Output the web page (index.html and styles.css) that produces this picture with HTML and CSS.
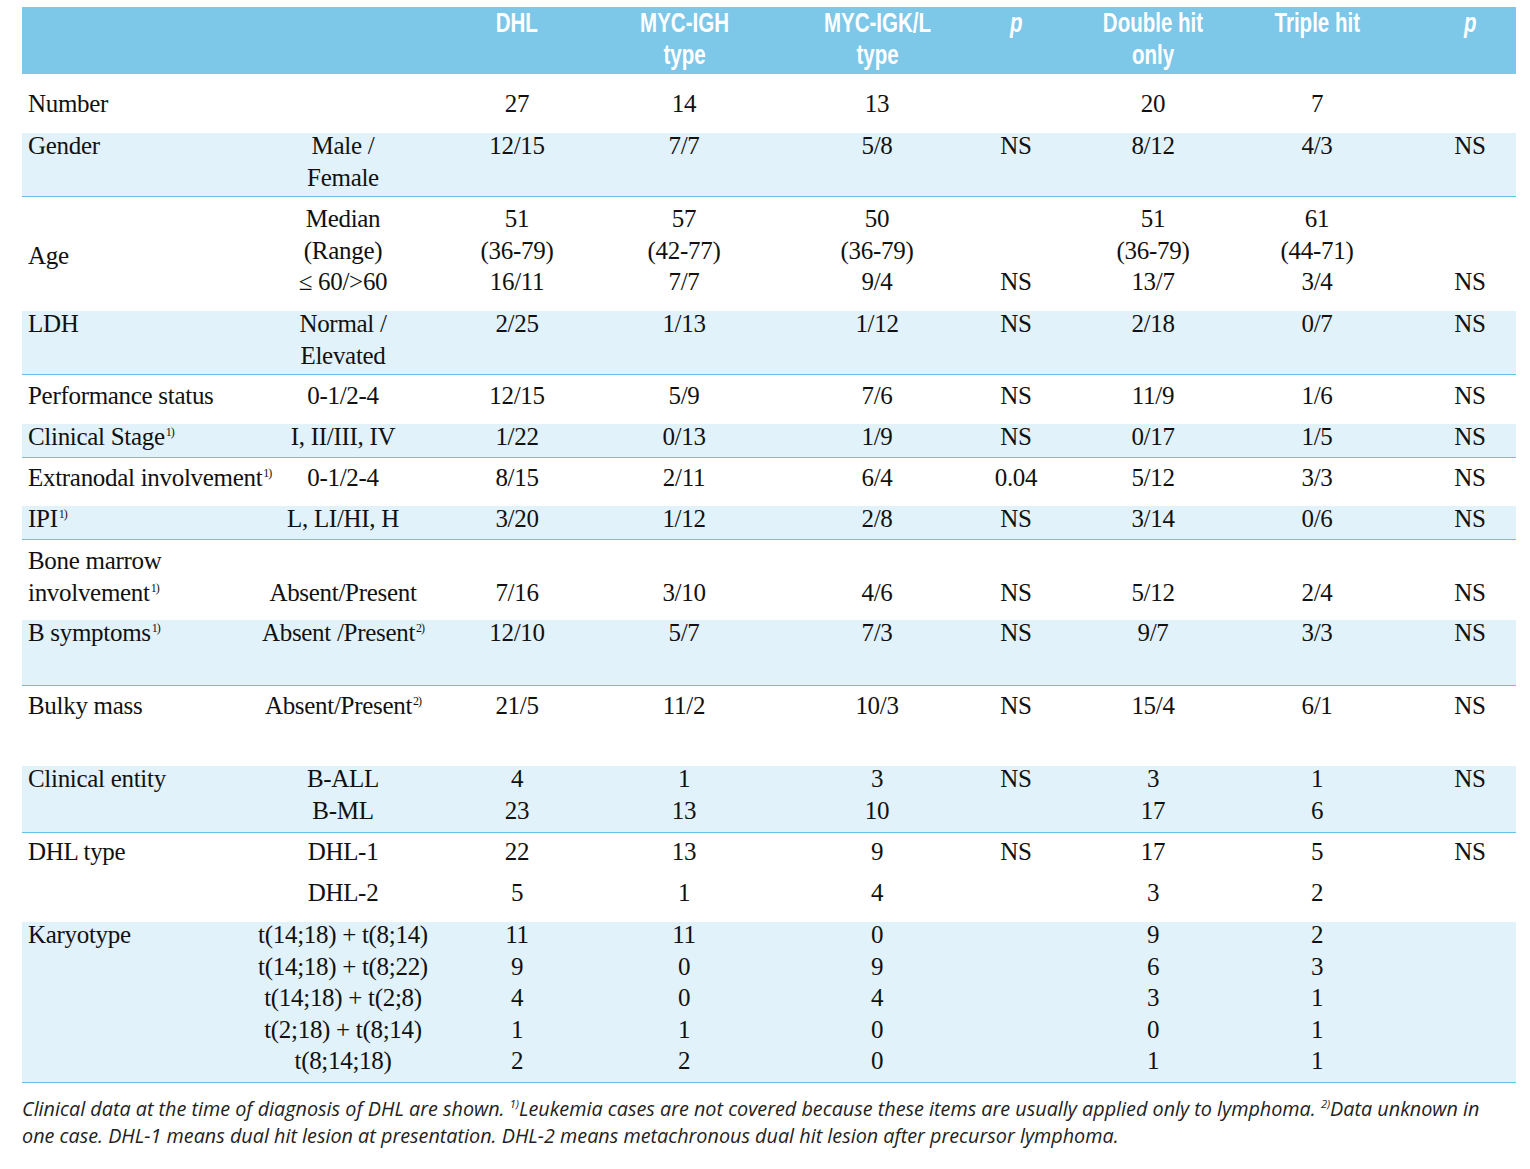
FILE: index.html
```html
<!DOCTYPE html>
<html lang="en">
<head>
<meta charset="utf-8">
<title>DHL clinical data</title>
<link rel="stylesheet" href="styles.css">
</head>
<body>
<div class="page">
  <div class="tbl">
    <div class="row head">
      <div></div>
      <div></div>
      <div class="c"><span class="hx">DHL</span></div>
      <div class="c"><span class="hx">MYC-IGH<br>type</span></div>
      <div class="c"><span class="hx">MYC-IGK/L<br>type</span></div>
      <div class="c"><span class="hx it">p</span></div>
      <div class="c"><span class="hx">Double hit<br>only</span></div>
      <div class="c"><span class="hx">Triple hit</span></div>
      <div class="c last"><span class="hx it">p</span></div>
    </div>

    <div class="row r-number">
      <div class="lbl">Number</div>
      <div class="c"></div>
      <div class="c">27</div>
      <div class="c">14</div>
      <div class="c">13</div>
      <div class="c"></div>
      <div class="c">20</div>
      <div class="c">7</div>
      <div class="c last"></div>
    </div>

    <div class="row band r-gender">
      <div class="lbl">Gender</div>
      <div class="c">Male /<br>Female</div>
      <div class="c">12/15</div>
      <div class="c">7/7</div>
      <div class="c">5/8</div>
      <div class="c">NS</div>
      <div class="c">8/12</div>
      <div class="c">4/3</div>
      <div class="c last">NS</div>
    </div>

    <div class="row r-age">
      <div class="lbl mid">Age</div>
      <div class="c">Median<br>(Range)<br>≤ 60/&gt;60</div>
      <div class="c">51<br>(36-79)<br>16/11</div>
      <div class="c">57<br>(42-77)<br>7/7</div>
      <div class="c">50<br>(36-79)<br>9/4</div>
      <div class="c"><br><br>NS</div>
      <div class="c">51<br>(36-79)<br>13/7</div>
      <div class="c">61<br>(44-71)<br>3/4</div>
      <div class="c last"><br><br>NS</div>
    </div>

    <div class="row band r-ldh">
      <div class="lbl">LDH</div>
      <div class="c">Normal /<br>Elevated</div>
      <div class="c">2/25</div>
      <div class="c">1/13</div>
      <div class="c">1/12</div>
      <div class="c">NS</div>
      <div class="c">2/18</div>
      <div class="c">0/7</div>
      <div class="c last">NS</div>
    </div>

    <div class="row r-ps">
      <div class="lbl">Performance status</div>
      <div class="c">0-1/2-4</div>
      <div class="c">12/15</div>
      <div class="c">5/9</div>
      <div class="c">7/6</div>
      <div class="c">NS</div>
      <div class="c">11/9</div>
      <div class="c">1/6</div>
      <div class="c last">NS</div>
    </div>

    <div class="row band r-cs">
      <div class="lbl">Clinical Stage<sup class="fn">1)</sup></div>
      <div class="c">I, II/III, IV</div>
      <div class="c">1/22</div>
      <div class="c">0/13</div>
      <div class="c">1/9</div>
      <div class="c">NS</div>
      <div class="c">0/17</div>
      <div class="c">1/5</div>
      <div class="c last">NS</div>
    </div>

    <div class="row r-extra">
      <div class="lbl">Extranodal involvement<sup class="fn">1)</sup></div>
      <div class="c">0-1/2-4</div>
      <div class="c">8/15</div>
      <div class="c">2/11</div>
      <div class="c">6/4</div>
      <div class="c">0.04</div>
      <div class="c">5/12</div>
      <div class="c">3/3</div>
      <div class="c last">NS</div>
    </div>

    <div class="row band r-ipi">
      <div class="lbl">IPI<sup class="fn">1)</sup></div>
      <div class="c">L, LI/HI, H</div>
      <div class="c">3/20</div>
      <div class="c">1/12</div>
      <div class="c">2/8</div>
      <div class="c">NS</div>
      <div class="c">3/14</div>
      <div class="c">0/6</div>
      <div class="c last">NS</div>
    </div>

    <div class="row r-bm">
      <div class="lbl">Bone marrow<br>involvement<sup class="fn">1)</sup></div>
      <div class="c"><br>Absent/Present</div>
      <div class="c"><br>7/16</div>
      <div class="c"><br>3/10</div>
      <div class="c"><br>4/6</div>
      <div class="c"><br>NS</div>
      <div class="c"><br>5/12</div>
      <div class="c"><br>2/4</div>
      <div class="c last"><br>NS</div>
    </div>

    <div class="row band r-bsym">
      <div class="lbl">B symptoms<sup class="fn">1)</sup></div>
      <div class="c">Absent /Present<sup class="fn">2)</sup></div>
      <div class="c">12/10</div>
      <div class="c">5/7</div>
      <div class="c">7/3</div>
      <div class="c">NS</div>
      <div class="c">9/7</div>
      <div class="c">3/3</div>
      <div class="c last">NS</div>
    </div>

    <div class="row r-bulky">
      <div class="lbl">Bulky mass</div>
      <div class="c">Absent/Present<sup class="fn">2)</sup></div>
      <div class="c">21/5</div>
      <div class="c">11/2</div>
      <div class="c">10/3</div>
      <div class="c">NS</div>
      <div class="c">15/4</div>
      <div class="c">6/1</div>
      <div class="c last">NS</div>
    </div>

    <div class="row band r-ce">
      <div class="lbl">Clinical entity</div>
      <div class="c">B-ALL<br>B-ML</div>
      <div class="c">4<br>23</div>
      <div class="c">1<br>13</div>
      <div class="c">3<br>10</div>
      <div class="c">NS</div>
      <div class="c">3<br>17</div>
      <div class="c">1<br>6</div>
      <div class="c last">NS</div>
    </div>

    <div class="row r-dhl1">
      <div class="lbl">DHL type</div>
      <div class="c">DHL-1</div>
      <div class="c">22</div>
      <div class="c">13</div>
      <div class="c">9</div>
      <div class="c">NS</div>
      <div class="c">17</div>
      <div class="c">5</div>
      <div class="c last">NS</div>
    </div>

    <div class="row r-dhl2">
      <div class="lbl"></div>
      <div class="c">DHL-2</div>
      <div class="c">5</div>
      <div class="c">1</div>
      <div class="c">4</div>
      <div class="c"></div>
      <div class="c">3</div>
      <div class="c">2</div>
      <div class="c last"></div>
    </div>

    <div class="row band r-karyo">
      <div class="lbl">Karyotype</div>
      <div class="c">t(14;18) + t(8;14)<br>t(14;18) + t(8;22)<br>t(14;18) + t(2;8)<br>t(2;18) + t(8;14)<br>t(8;14;18)</div>
      <div class="c">11<br>9<br>4<br>1<br>2</div>
      <div class="c">11<br>0<br>0<br>1<br>2</div>
      <div class="c">0<br>9<br>4<br>0<br>0</div>
      <div class="c"></div>
      <div class="c">9<br>6<br>3<br>0<br>1</div>
      <div class="c">2<br>3<br>1<br>1<br>1</div>
      <div class="c last"></div>
    </div>
  </div>

  <p class="note">Clinical data at the time of diagnosis of DHL are shown. <sup class="nfn">1)</sup>Leukemia cases are not covered because these items are usually applied only to lymphoma. <sup class="nfn">2)</sup>Data unknown in<br>one case. DHL-1 means dual hit lesion at presentation. DHL-2 means metachronous dual hit lesion after precursor lymphoma.</p>
</div>
</body>
</html>
```

FILE: styles.css
```css
html, body {
  margin: 0;
  padding: 0;
  background: #ffffff;
}

.page {
  padding: 7px 14px 0 22px;
}

.tbl {
  width: 1494px;
  font-family: "Liberation Serif", "Times New Roman", serif;
  font-size: 25px;
  letter-spacing: -0.3px;
  line-height: 31.5px;
  color: #111111;
}

.row {
  display: grid;
  grid-template-columns: 228px 186px 162px 172px 214px 64px 210px 118px 140px;
  box-sizing: border-box;
  white-space: nowrap;
}

.row > div {
  min-width: 0;
}

.lbl {
  padding-left: 6px;
  text-align: left;
}

.lbl.mid {
  align-self: center;
}

.c {
  text-align: center;
}

.c.last {
  padding-left: 48px;
}

.head {
  height: 67px;
  background: #7dc7e8;
  font-family: "Liberation Sans", Arial, sans-serif;
  font-weight: 700;
  font-size: 27px;
  letter-spacing: 0;
  line-height: 32px;
  color: #ffffff;
}

.hx {
  display: inline-block;
  transform: scaleX(0.76);
  transform-origin: center top;
}

.hx.it {
  font-style: italic;
}

.band {
  background: linear-gradient(to bottom, #ffffff 0, #ffffff 3px, #e1f2fb 3px, #e1f2fb 100%);
  border-bottom: 1px solid #67c1e8;
}

.fn {
  font-size: 12px;
  line-height: 0;
  vertical-align: 9px;
  letter-spacing: -1px;
  margin-left: 1px;
}

.r-number { height: 56px; padding-top: 14px; }
.r-gender { height: 67px; padding-top: 0; }
.r-age    { height: 111px; padding-top: 6px; }
.r-ldh    { height: 67px; padding-top: 0; }
.r-ps     { height: 46px; padding-top: 5px; }
.r-cs     { height: 37px; padding-top: 0; }
.r-extra  { height: 45px; padding-top: 4px; }
.r-ipi    { height: 37px; padding-top: 0; }
.r-bm     { height: 77px; padding-top: 5px; }
.r-bsym   { height: 69px; padding-top: 0; }
.r-bulky  { height: 77px; padding-top: 4px; }
.r-ce     { height: 70px; padding-top: 0; }
.r-dhl1   { height: 44px; padding-top: 3px; }
.r-dhl2   { height: 42px; padding-top: 0; }
.r-karyo  { height: 164px; padding-top: 0; }

.note {
  margin: 12px 0 0 0;
  font-family: "Open Sans", "DejaVu Sans", sans-serif;
  font-style: italic;
  font-size: 19.8px;
  line-height: 27px;
  color: #222222;
  white-space: nowrap;
}

.nfn {
  font-size: 11px;
  line-height: 0;
  vertical-align: 8px;
}
```
